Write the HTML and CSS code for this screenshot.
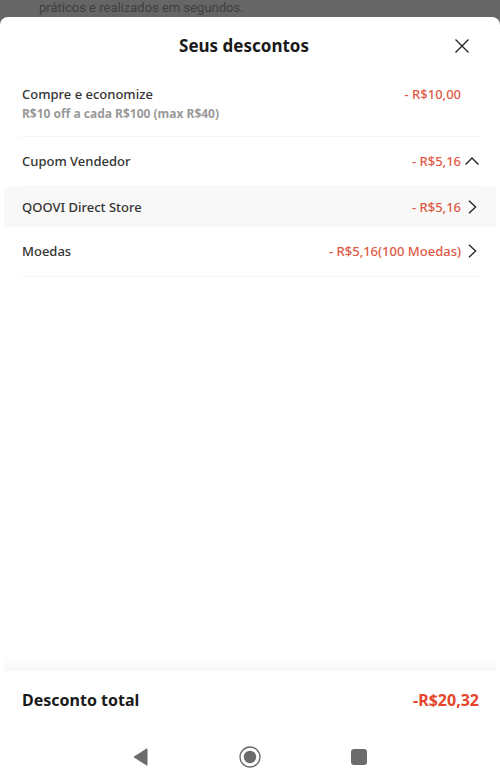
FILE: index.html
```html
<!DOCTYPE html>
<html lang="pt-BR">
  <head>
    <meta charset="UTF-8" />
    <meta name="viewport" content="width=device-width, initial-scale=1.0" />
    <title>Seus descontos</title>
    <link rel="stylesheet" href="styles.css">
  </head>

  <body>
    <p class="page-behind">práticos e realizados em segundos.</p>

    <main class="sheet">
      <header class="sheet-header">
        <h1>Seus descontos</h1>
        <button class="close" aria-label="Fechar">
          <svg width="14" height="14" viewBox="0 0 14 14">
            <path d="M.5 .5L13.5 13.5M13.5 .5L.5 13.5" />
          </svg>
        </button>
      </header>

      <ul class="discounts">
        <li class="line">
          <div class="row">
            <span>Compre e economize</span>
            <span class="value">- R$10,00</span>
          </div>
          <p class="note">R$10 off a cada R$100 (max R$40)</p>
        </li>
        <li class="line">
          <button class="row" aria-expanded="true">
            <span>Cupom Vendedor</span>
            <span class="value">- R$5,16</span>
            <svg class="arrow" width="14" height="14" viewBox="0 0 14 14">
              <path d="M.6 10.5L7 4L13.4 10.5" />
            </svg>
          </button>
        </li>
        <li class="store">
          <button class="row">
            <span>QOOVI Direct Store</span>
            <span class="value">- R$5,16</span>
            <svg class="arrow" width="14" height="14" viewBox="0 0 14 14">
              <path d="M4 .8L10.6 7L4 13.2" />
            </svg>
          </button>
        </li>
        <li class="line">
          <button class="row">
            <span>Moedas</span>
            <span class="value">- R$5,16(100 Moedas)</span>
            <svg class="arrow" width="14" height="14" viewBox="0 0 14 14">
              <path d="M4 .8L10.6 7L4 13.2" />
            </svg>
          </button>
        </li>
      </ul>

      <div class="fade"></div>
      <div class="total">
        <span>Desconto total</span>
        <span class="total-value">-R$20,32</span>
      </div>

      <nav class="system-nav">
        <button aria-label="Voltar">
          <svg width="22" height="22" viewBox="0 0 22 22">
            <path d="M4 11L17 2.8V19.2Z" fill="#6b6b6b" stroke="#6b6b6b" stroke-width="1" stroke-linejoin="round" />
          </svg>
        </button>
        <button aria-label="Início">
          <svg width="22" height="22" viewBox="0 0 22 22">
            <circle cx="11" cy="11" r="10" fill="none" stroke="#6b6b6b" stroke-width="1.4" />
            <circle cx="11" cy="11" r="6.2" fill="#6b6b6b" />
          </svg>
        </button>
        <button aria-label="Recentes">
          <svg width="22" height="22" viewBox="0 0 22 22">
            <rect x="3" y="3" width="16" height="16" rx="3" fill="#6b6b6b" />
          </svg>
        </button>
      </nav>
    </main>
  </body>
</html>
```

FILE: styles.css
```css
* {
  box-sizing: border-box;
}

body {
  display: flex;
  flex-direction: column;
  min-height: 100vh;
  margin: 0;
  background: #666;
  color: #333;
  font-family: "Noto Sans", sans-serif;
  font-size: 13px;
  line-height: 20px;
}

button {
  padding: 0;
  border: none;
  background: none;
  color: inherit;
  font: inherit;
  cursor: pointer;
}

svg {
  display: block;
}

.page-behind {
  height: 17px;
  margin: 0;
  padding-left: 39px;
  color: #404040;
  font-family: Roboto, sans-serif;
  line-height: 15px;
}

.sheet {
  display: flex;
  flex: 1;
  flex-direction: column;
  border-radius: 8px 8px 0 0;
  background: #fff;
}

.sheet-header {
  display: grid;
  grid-template-columns: 1fr auto 1fr;
  align-items: center;
  height: 58px;
  padding: 0 31px 0 19px;
}

.sheet-header h1 {
  grid-column: 2;
  margin: 0;
  color: #1a1a1a;
  font-size: 17px;
  font-weight: 700;
}

.close {
  justify-self: end;
}

.close path,
.arrow path {
  fill: none;
  stroke: #222;
  stroke-width: 1.3;
}

.discounts {
  flex: 1;
  margin: 0;
  padding: 0;
  list-style: none;
  font-weight: 500;
}

.line {
  margin: 0 20px;
  padding: 14px 0 15px;
  border-bottom: 1px solid #f6f6f6;
}

.line:first-child {
  padding: 9px 0 12px;
}

.row {
  display: flex;
  align-items: center;
  width: 100%;
  padding: 0 1px 0 2px;
}

.value {
  margin-left: auto;
  margin-right: 18px;
  color: #de5945;
}

.arrow {
  margin-left: -14px;
}

.note {
  margin: 0;
  padding-left: 2px;
  color: #999;
  font-size: 12px;
  font-weight: 700;
}

.store {
  margin: 0 4px;
  padding: 10px 16px;
  background: #f8f8f8;
}

.fade {
  height: 16px;
  margin: 0 4px;
  background: linear-gradient(#fff, #f8f8f8);
}

.total {
  display: flex;
  justify-content: space-between;
  padding: 19px 21px 18px 22px;
  color: #1a1a1a;
  font-size: 16px;
  font-weight: 700;
}

.total-value {
  color: #e5452c;
}

.system-nav {
  display: flex;
  justify-content: space-between;
  padding: 18px 26% 16px;
}
```
